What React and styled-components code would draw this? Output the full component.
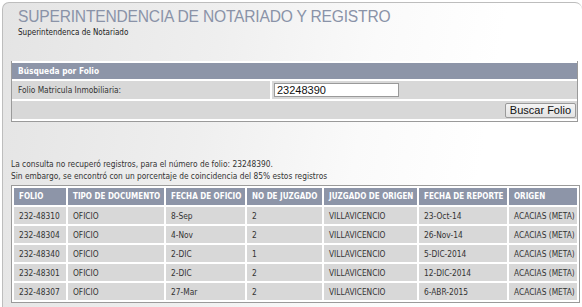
import React from 'react'
import styled, { createGlobalStyle } from 'styled-components'

const GlobalStyle = createGlobalStyle`
  html, body {
    margin: 0;
    padding: 0;
    background: #ffffff;
    overflow: hidden;
  }
  body {
    font-family: "DejaVu Sans Condensed", "DejaVu Sans", Verdana, sans-serif;
    font-size: 8.3px;
    color: #333333;
  }
`;

const rows = [
  { folio: '232-48310', tipo: 'OFICIO', fecha: '8-Sep', juzgado: '2', origenJuzgado: 'VILLAVICENCIO', reporte: '23-Oct-14', origen: 'ACACIAS (META)' },
  { folio: '232-48304', tipo: 'OFICIO', fecha: '4-Nov', juzgado: '2', origenJuzgado: 'VILLAVICENCIO', reporte: '26-Nov-14', origen: 'ACACIAS (META)' },
  { folio: '232-48340', tipo: 'OFICIO', fecha: '2-DIC', juzgado: '1', origenJuzgado: 'VILLAVICENCIO', reporte: '5-DIC-2014', origen: 'ACACIAS (META)' },
  { folio: '232-48301', tipo: 'OFICIO', fecha: '2-DIC', juzgado: '2', origenJuzgado: 'VILLAVICENCIO', reporte: '12-DIC-2014', origen: 'ACACIAS (META)' },
  { folio: '232-48307', tipo: 'OFICIO', fecha: '27-Mar', juzgado: '2', origenJuzgado: 'VILLAVICENCIO', reporte: '6-ABR-2015', origen: 'ACACIAS (META)' },
];

const columns = [
  { key: 'folio', label: 'FOLIO', width: 52 },
  { key: 'tipo', label: 'TIPO DE DOCUMENTO', width: 96 },
  { key: 'fecha', label: 'FECHA DE OFICIO', width: 79 },
  { key: 'juzgado', label: 'NO DE JUZGADO', width: 75 },
  { key: 'origenJuzgado', label: 'JUZGADO DE ORIGEN', width: 93 },
  { key: 'reporte', label: 'FECHA DE REPORTE', width: 88 },
  { key: 'origen', label: 'ORIGEN', width: 68 },
];

export default function App() {
  return (
    <>
      <GlobalStyle />
      <Page>
        <Header>
          <Title>SUPERINTENDENCIA DE NOTARIADO Y REGISTRO</Title>
          <Subtitle>Superintendenca de Notariado</Subtitle>
        </Header>

        <SearchBox>
          <tbody>
            <tr>
              <SearchHead colSpan={2}>Búsqueda por Folio</SearchHead>
            </tr>
            <tr>
              <LabelCell>Folio Matricula Inmobiliaria:</LabelCell>
              <InputCell>
                <FolioInput defaultValue="23248390" />
              </InputCell>
            </tr>
            <tr>
              <ActionCell colSpan={2}>
                <SearchButton type="button">Buscar Folio</SearchButton>
              </ActionCell>
            </tr>
          </tbody>
        </SearchBox>

        <Message>
          La consulta no recuperó registros, para el número de folio: 23248390.
          <br />
          Sin embargo, se encontró con un porcentaje de coincidencia del 85% estos registros
        </Message>

        <Results>
          <thead>
            <tr>
              {columns.map((c) => (
                <HeadCell key={c.key} $width={c.width}>{c.label}</HeadCell>
              ))}
            </tr>
          </thead>
          <tbody>
            {rows.map((r) => (
              <tr key={r.folio}>
                {columns.map((c) => (
                  <DataCell key={c.key}>{r[c.key]}</DataCell>
                ))}
              </tr>
            ))}
          </tbody>
        </Results>
      </Page>
    </>
  )
}

const Page = styled.div`
  margin: 2px 0 0 2px;
  height: calc(100vh - 2px);
  box-sizing: border-box;
  padding: 4px 3px 0 8px;
  border: 1px solid #bdbdbd;
  border-right: none;
  border-bottom: none;
  border-radius: 7px 7px 0 0;
  background: linear-gradient(100deg, #e4e4e4 0%, #efefef 35%, #fafafa 60%, #ffffff 80%);
`;

const Header = styled.div`
  padding-left: 7px;
  height: 54px;
`;

const Title = styled.h1`
  margin: 0;
  font-family: "Liberation Sans", Arial, sans-serif;
  font-weight: normal;
  font-size: 15.6px;
  line-height: 19px;
  color: #8a93a8;
  letter-spacing: -0.2px;
`;

const Subtitle = styled.div`
  font-size: 8px;
  line-height: 10px;
  margin-top: 2px;
  color: #222222;
`;

const SearchBox = styled.table`
  width: 567px;
  border-collapse: separate;
  border-spacing: 0 2px;
  border: 1px solid #9a9a9a;
  border-top: none;
  background: #ffffff;
  td {
    padding: 0 6px;
  }
`;

const SearchHead = styled.td`
  background: #8d95a8;
  color: #ffffff;
  font-weight: bold;
  height: 16px;
`;

const LabelCell = styled.td`
  background: #d8d8d8;
  height: 18px;
  width: 246px;
  border-right: 2px solid #ffffff;
`;

const InputCell = styled.td`
  background: #d8d8d8;
`;

const FolioInput = styled.input`
  box-sizing: border-box;
  width: 125px;
  height: 14px;
  padding: 0 2px;
  margin-left: -4px;
  border: 1px solid #9a9a9a;
  font-family: "Liberation Sans", Arial, sans-serif;
  font-size: 11px;
  color: #111111;
  background: #ffffff;
  outline: none;
`;

const ActionCell = styled.td`
  background: #d8d8d8;
  height: 18px;
  text-align: right;
  && {
    padding: 0 1px 0 0;
  }
`;

const SearchButton = styled.button`
  height: 15px;
  padding: 0 4px;
  margin: 0;
  vertical-align: middle;
  border: 1px solid #9a9a9a;
  border-radius: 2px;
  background: linear-gradient(#f4f4f4, #e2e2e2);
  font-family: "Liberation Sans", Arial, sans-serif;
  font-size: 11px;
  line-height: 13px;
  color: #111111;
`;

const Message = styled.p`
  margin: 36px 0 0 0;
  font-size: 8.3px;
  line-height: 12px;
  color: #333333;
`;

const Results = styled.table`
  margin-top: 3px;
  width: 567px;
  border: 1px solid #9a9a9a;
  border-collapse: separate;
  border-spacing: 2px;
  background: #ffffff;
  table-layout: fixed;
`;

const HeadCell = styled.th`
  box-sizing: border-box;
  width: ${(p) => p.$width}px;
  height: 17px;
  padding: 0 2px 0 5px;
  background: #8d95a8;
  color: #ffffff;
  font-weight: bold;
  font-size: 8px;
  text-align: left;
  white-space: nowrap;
  overflow: hidden;
`;

const DataCell = styled.td`
  box-sizing: border-box;
  height: 17px;
  padding: 0 5px;
  background: #d8d8d8;
  color: #333333;
  white-space: nowrap;
  overflow: hidden;
`;
